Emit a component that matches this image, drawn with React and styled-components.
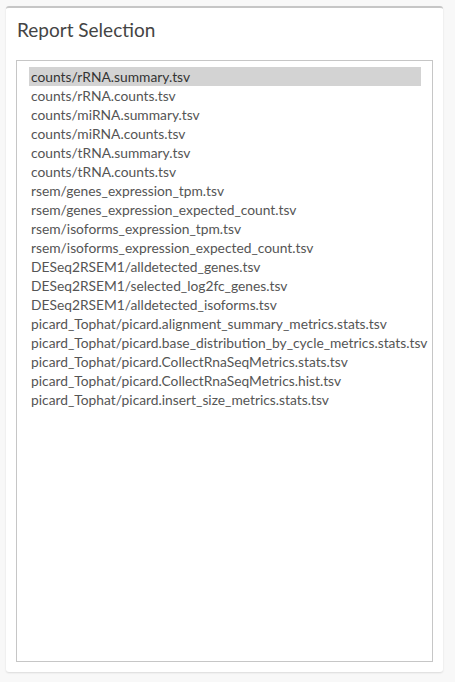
import { createGlobalStyle, styled } from 'styled-components';

const GlobalStyle = createGlobalStyle`
	body {
		margin: 0;
		background: #f8f8f8;
		font-family: Lato, 'Open Sans', sans-serif;
	}
`;

const Page = styled.div`
	padding: 6px 12px 10px 6px;
`;

const Card = styled.section`
	width: 437px;
	height: 666px;
	box-sizing: border-box;
	background: #fff;
	border-top: 2px solid #c6c6c6;
	border-radius: 3px;
	box-shadow: 0 1px 2px rgba(0, 0, 0, 0.12);
	padding: 10px 10px 10px 10px;
	display: flex;
	flex-direction: column;
`;

const Title = styled.h3`
	margin: 0 0 0 1px;
	height: 42px;
	font-size: 19px;
	font-weight: 400;
	color: #444;
	line-height: 23px;
`;

const ListBox = styled.div`
	flex: 1;
	border: 1px solid #c6c6c6;
	padding: 6px 11px 6px 12px;
`;

const Option = styled.div`
	height: 19px;
	line-height: 19px;
	padding-left: 2px;
	font-size: 13.8px;
	white-space: nowrap;
	color: ${({ $selected }) => ($selected ? '#333' : '#555')};
	background: ${({ $selected }) => ($selected ? '#d3d3d3' : 'transparent')};
`;

const files = [
	'counts/rRNA.summary.tsv',
	'counts/rRNA.counts.tsv',
	'counts/miRNA.summary.tsv',
	'counts/miRNA.counts.tsv',
	'counts/tRNA.summary.tsv',
	'counts/tRNA.counts.tsv',
	'rsem/genes_expression_tpm.tsv',
	'rsem/genes_expression_expected_count.tsv',
	'rsem/isoforms_expression_tpm.tsv',
	'rsem/isoforms_expression_expected_count.tsv',
	'DESeq2RSEM1/alldetected_genes.tsv',
	'DESeq2RSEM1/selected_log2fc_genes.tsv',
	'DESeq2RSEM1/alldetected_isoforms.tsv',
	'picard_Tophat/picard.alignment_summary_metrics.stats.tsv',
	'picard_Tophat/picard.base_distribution_by_cycle_metrics.stats.tsv',
	'picard_Tophat/picard.CollectRnaSeqMetrics.stats.tsv',
	'picard_Tophat/picard.CollectRnaSeqMetrics.hist.tsv',
	'picard_Tophat/picard.insert_size_metrics.stats.tsv',
];

export default function App() {
	return (
		<Page>
			<GlobalStyle />
			<Card>
				<Title>Report Selection</Title>
				<ListBox>
					{files.map((f, i) => (
						<Option key={f} $selected={i === 0}>
							{f}
						</Option>
					))}
				</ListBox>
			</Card>
		</Page>
	);
}
